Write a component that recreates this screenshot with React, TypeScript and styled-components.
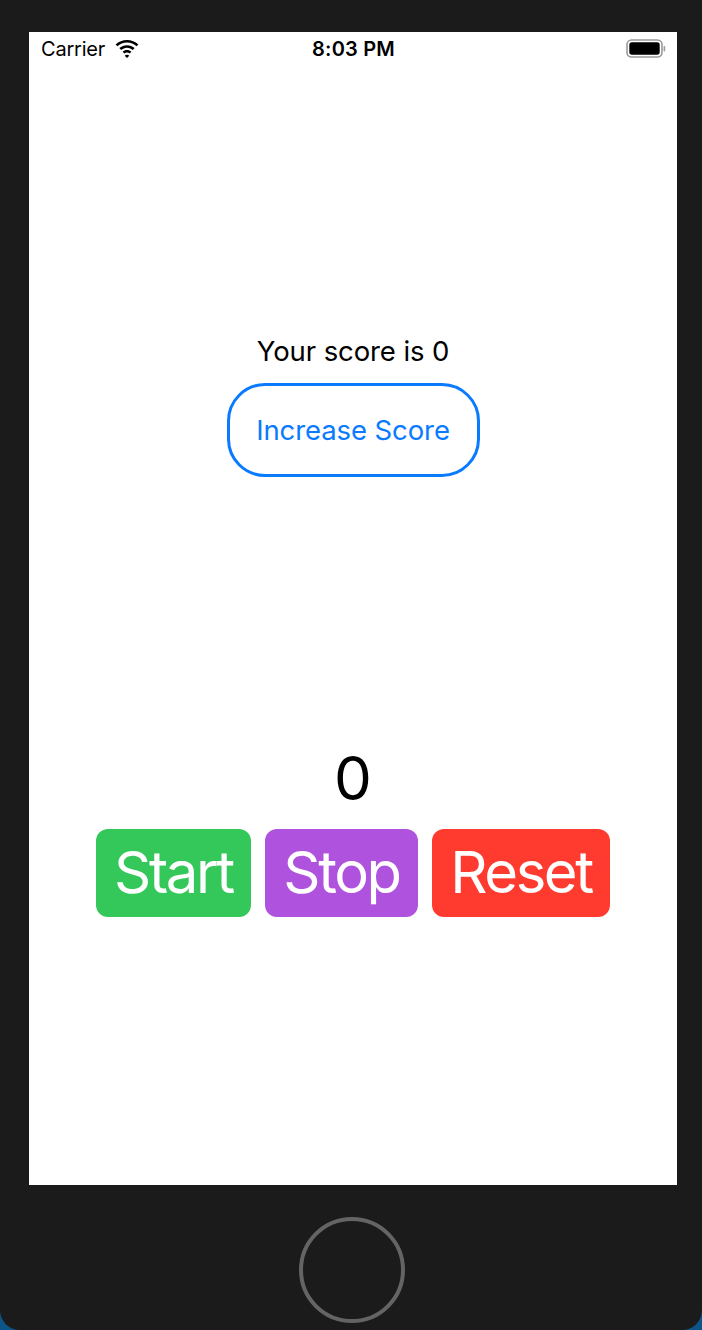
import styled, { createGlobalStyle } from 'styled-components';

const GlobalStyle = createGlobalStyle`
  html, body {
    margin: 0;
    padding: 0;
    background: #0d5588;
    font-family: Inter, "Noto Sans", "Liberation Sans", sans-serif;
  }
`;

const Device = styled.div`
  width: 702px;
  height: 1330px;
  box-sizing: border-box;
  background: #1b1b1b;
  border-radius: 0 0 20px 20px;
  padding: 32px 25px 0 29px;
  display: flex;
  flex-direction: column;
  overflow: hidden;
`;

const Screen = styled.div`
  height: 1153px;
  background: #ffffff;
  display: flex;
  flex-direction: column;
`;

const StatusBar = styled.div`
  height: 34px;
  display: grid;
  grid-template-columns: 1fr auto 1fr;
  align-items: center;
  padding: 0 11px 0 12px;
  color: #000;
`;

const Carrier = styled.div`
  display: flex;
  align-items: center;
  gap: 10px;
  font-size: 20px;
  letter-spacing: -0.2px;
`;

const Clock = styled.div`
  font-size: 20px;
  font-weight: 600;
  letter-spacing: 0.2px;
`;

const BatteryWrap = styled.div`
  display: flex;
  justify-content: flex-end;
`;

const ScoreBlock = styled.div`
  margin-top: 268px;
  display: flex;
  flex-direction: column;
  align-items: center;
`;

const ScoreText = styled.div`
  font-size: 27.5px;
  line-height: 34px;
  color: #000;
  letter-spacing: -0.1px;
`;

const OutlineButton = styled.button`
  margin-top: 15px;
  width: 253px;
  height: 94px;
  box-sizing: border-box;
  border: 3px solid #0a7bff;
  border-radius: 38px;
  background: #fff;
  color: #0a7bff;
  font-family: inherit;
  font-size: 27.5px;
  letter-spacing: -0.1px;
  padding: 0;
  cursor: pointer;
`;

const TimerBlock = styled.div`
  margin-top: 266px;
  display: flex;
  flex-direction: column;
  align-items: center;
`;

const TimerValue = styled.div`
  font-size: 60px;
  line-height: 70px;
  color: #000;
`;

const ButtonRow = styled.div`
  margin-top: 16px;
  display: flex;
  gap: 14px;
`;

const ActionButton = styled.button<{ $bg: string; $w: number }>`
  width: ${({ $w }) => $w}px;
  height: 88px;
  border: none;
  border-radius: 12px;
  background: ${({ $bg }) => $bg};
  color: #fff;
  font-family: inherit;
  font-size: 58px;
  letter-spacing: -2.4px;
  padding: 0 0 3px;
  cursor: pointer;
`;

const HomeArea = styled.div`
  flex: 1;
  display: flex;
  justify-content: center;
  padding-top: 32px;
  margin-left: -2px;
`;

const HomeButton = styled.div`
  width: 106px;
  height: 106px;
  box-sizing: border-box;
  border: 4px solid #646464;
  border-radius: 50%;
`;

const WifiIcon = () => (
  <svg width="24" height="18" viewBox="0 0 21 16">
    <path d="M10.5 2.2c3.3 0 6.3 1.3 8.5 3.4l1.6-1.7C17.9 1.5 14.4 0 10.5 0S3.1 1.5.4 3.9L2 5.6C4.2 3.5 7.2 2.2 10.5 2.2z" fill="#000" />
    <path d="M10.5 6.8c2 0 3.8.8 5.2 2.1l1.6-1.7C15.5 5.6 13.1 4.6 10.5 4.6S5.5 5.6 3.7 7.2l1.6 1.7c1.4-1.3 3.2-2.1 5.2-2.1z" fill="#000" />
    <path d="M10.5 11.2c.9 0 1.7.3 2.3.9l1.6-1.7c-1-1-2.4-1.6-3.9-1.6s-2.9.6-3.9 1.6l1.6 1.7c.6-.6 1.4-.9 2.3-.9z" fill="#000" />
    <path d="M10.5 16l2-2.1c-.5-.5-1.2-.8-2-.8s-1.5.3-2 .8z" fill="#000" />
  </svg>
);

const BatteryIcon = () => (
  <svg width="40" height="20" viewBox="0 0 40 20">
    <rect x="1" y="1" width="35" height="17" rx="4.5" fill="none" stroke="#9a9a9a" strokeWidth="1.6" />
    <rect x="3.3" y="3.3" width="30.4" height="12.4" rx="2.6" fill="#000" />
    <rect x="37.6" y="7" width="1.6" height="5.5" rx="0.8" fill="#9a9a9a" />
  </svg>
);

export default function App() {
  return (
    <>
      <GlobalStyle />
      <Device>
        <Screen>
          <StatusBar>
            <Carrier>
              Carrier
              <WifiIcon />
            </Carrier>
            <Clock>8:03 PM</Clock>
            <BatteryWrap>
              <BatteryIcon />
            </BatteryWrap>
          </StatusBar>
          <ScoreBlock>
            <ScoreText>Your score is 0</ScoreText>
            <OutlineButton>Increase Score</OutlineButton>
          </ScoreBlock>
          <TimerBlock>
            <TimerValue>0</TimerValue>
            <ButtonRow>
              <ActionButton $bg="#34c85a" $w={155}>Start</ActionButton>
              <ActionButton $bg="#af52de" $w={153}>Stop</ActionButton>
              <ActionButton $bg="#ff3b30" $w={178}>Reset</ActionButton>
            </ButtonRow>
          </TimerBlock>
        </Screen>
        <HomeArea>
          <HomeButton />
        </HomeArea>
      </Device>
    </>
  );
}
